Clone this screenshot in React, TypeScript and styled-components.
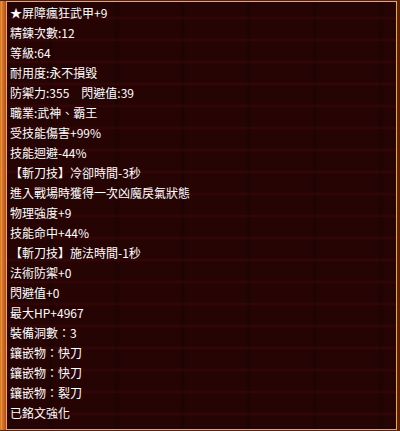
import React from "react";
import styled, { createGlobalStyle } from "styled-components";

const Global = createGlobalStyle`
  html, body { margin: 0; padding: 0; background: #1a0303; }
  #root { width: 400px; height: 431px; }
`;

const Frame = styled.div`
  width: 400px;
  height: 431px;
  box-sizing: border-box;
  display: flex;
  padding: 1px 3px 1px 0;
  background: #5a2208;
`;

const LeftRail = styled.div`
  width: 6px;
  flex: none;
  background: linear-gradient(
    to right,
    #b85a18 0px,
    #f7a23a 1px,
    #e58030 2px,
    #cf6a2c 3px,
    #c05a2a 5px,
    #a04820 6px
  );
`;

const Panel = styled.div`
  flex: 1;
  box-sizing: border-box;
  border: 1px solid #f8a73c;
  padding: 1px 0 0 3px;
  background-color: #260404;
  background-image:
    repeating-linear-gradient(
      to bottom,
      rgba(110, 16, 16, 0) 0px,
      rgba(110, 16, 16, 0) 14px,
      rgba(110, 16, 16, 0.22) 16px,
      rgba(110, 16, 16, 0) 18px,
      rgba(110, 16, 16, 0) 22px
    ),
    repeating-linear-gradient(
      to right,
      rgba(0, 0, 0, 0) 0px,
      rgba(0, 0, 0, 0) 40px,
      rgba(0, 0, 0, 0.2) 44px,
      rgba(0, 0, 0, 0) 48px,
      rgba(0, 0, 0, 0) 66px
    );
  font-family: "Noto Sans CJK TC", "Noto Sans CJK SC", "Liberation Sans", sans-serif;
  font-size: 12px;
  color: #ffffff;
`;

const Line = styled.div`
  height: 20px;
  line-height: 20px;
  white-space: pre;
`;

const lines = [
  "★屏障瘋狂武甲+9",
  "精鍊次數:12",
  "等級:64",
  "耐用度:永不損毀",
  "防禦力:355　閃避值:39",
  "職業:武神、霸王",
  "受技能傷害+99%",
  "技能迴避-44%",
  "【斬刀技】冷卻時間-3秒",
  "進入戰場時獲得一次凶魔戾氣狀態",
  "物理強度+9",
  "技能命中+44%",
  "【斬刀技】施法時間-1秒",
  "法術防禦+0",
  "閃避值+0",
  "最大HP+4967",
  "裝備洞數：3",
  "鑲嵌物：快刀",
  "鑲嵌物：快刀",
  "鑲嵌物：裂刀",
  "已銘文強化",
];

export default function App() {
  return (
    <>
      <Global />
      <Frame>
        <LeftRail />
        <Panel>
          {lines.map((t, i) => (
            <Line key={i}>{t}</Line>
          ))}
        </Panel>
      </Frame>
    </>
  );
}
